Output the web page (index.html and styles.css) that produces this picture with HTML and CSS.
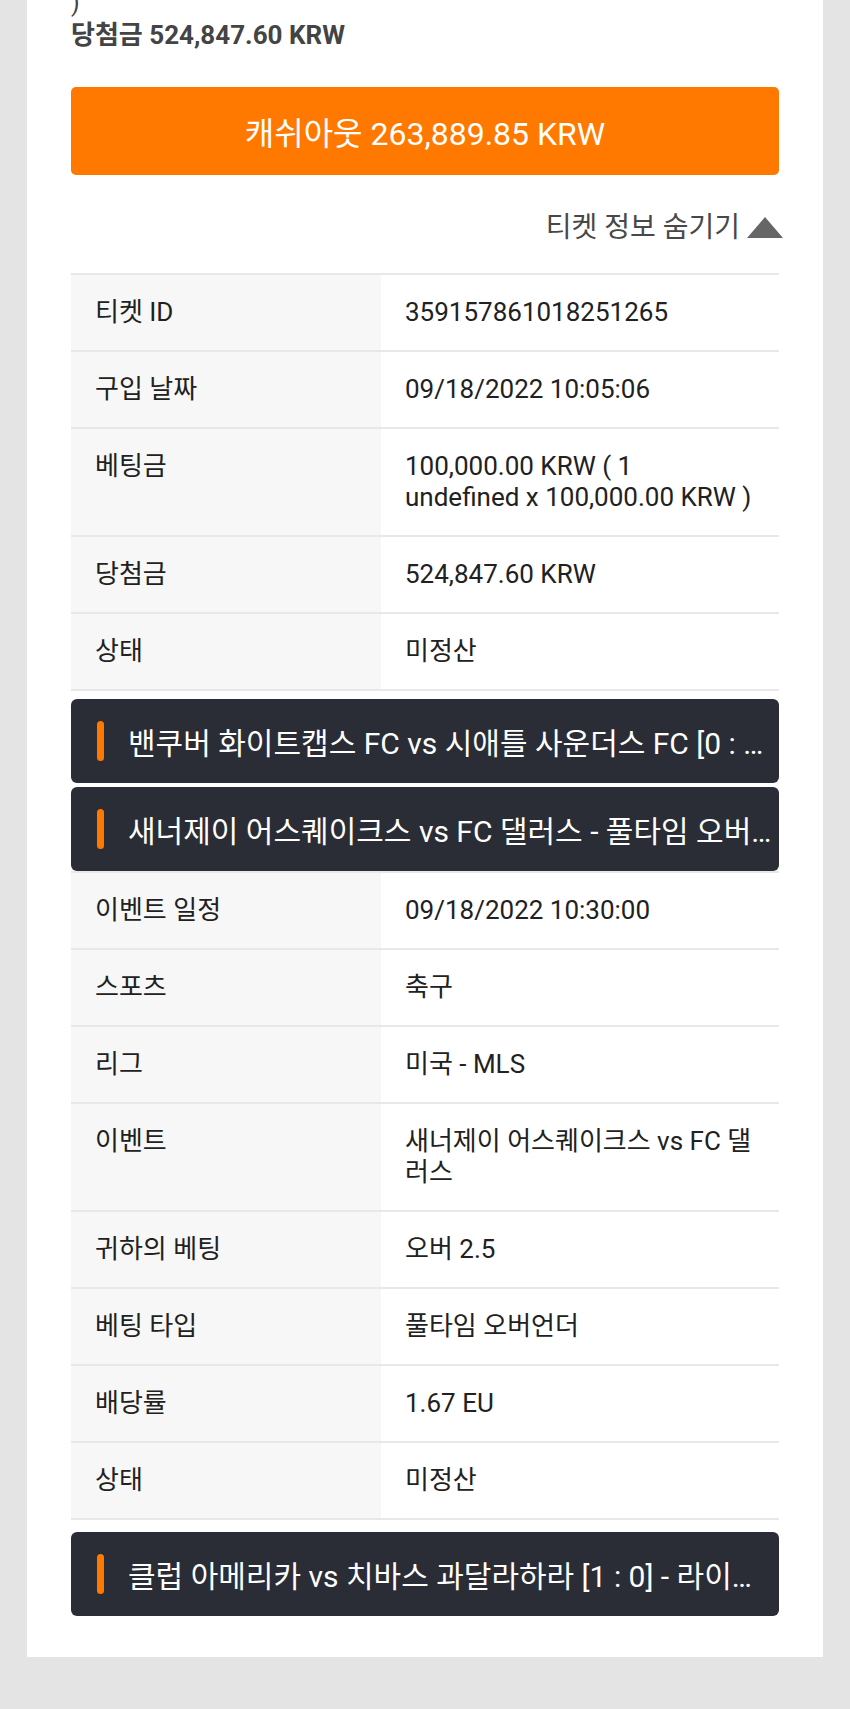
FILE: index.html
```html
<!DOCTYPE html>
<html lang="ko">
<head>
  <meta charset="UTF-8">
  <title>티켓 정보</title>
  <link rel="stylesheet" href="styles.css">
</head>
<body>
  <div class="card">
    <div class="cut-line">)</div>
    <div class="win-total">당첨금 524,847.60 KRW</div>

    <button class="cashout">캐쉬아웃 263,889.85 KRW</button>

    <div class="toggle">
      <span>티켓 정보 숨기기</span>
      <span class="tri"></span>
    </div>

    <table class="info">
      <tr><th>티켓 ID</th><td>359157861018251265</td></tr>
      <tr><th>구입 날짜</th><td>09/18/2022 10:05:06</td></tr>
      <tr><th>베팅금</th><td>100,000.00 KRW ( 1 <span class="nowrap">undefined x 100,000.00 KRW )</span></td></tr>
      <tr><th>당첨금</th><td>524,847.60 KRW</td></tr>
      <tr><th>상태</th><td>미정산</td></tr>
    </table>

    <div class="events">
      <div class="event-bar"><span class="mark"></span><span class="title">밴쿠버 화이트캡스 FC vs 시애틀 사운더스 FC [0 : 0] - 라이브 승무패</span></div>
      <div class="event-bar"><span class="mark"></span><span class="title">새너제이 어스퀘이크스 vs FC 댈러스 - 풀타임 오버언더</span></div>
    </div>

    <table class="info">
      <tr><th>이벤트 일정</th><td>09/18/2022 10:30:00</td></tr>
      <tr><th>스포츠</th><td>축구</td></tr>
      <tr><th>리그</th><td>미국 - MLS</td></tr>
      <tr><th>이벤트</th><td>새너제이 어스퀘이크스 vs FC 댈러스</td></tr>
      <tr><th>귀하의 베팅</th><td>오버 2.5</td></tr>
      <tr><th>베팅 타입</th><td>풀타임 오버언더</td></tr>
      <tr><th>배당률</th><td>1.67 EU</td></tr>
      <tr><th>상태</th><td>미정산</td></tr>
    </table>

    <div class="events last">
      <div class="event-bar"><span class="mark"></span><span class="title">클럽 아메리카 vs 치바스 과달라하라 [1 : 0] - 라이브 승무패</span></div>
    </div>
  </div>
</body>
</html>
```

FILE: styles.css
```css
body {
  margin: 0;
  padding: 0;
  background-color: #e4e4e4;
  font-family: Roboto, "Noto Sans CJK KR", sans-serif;
  color: #212121;
  height: 1709px;
  overflow: hidden;
}

.card {
  margin: 0 27px;
  padding: 0 44px 41px;
  background-color: #fff;
}

.cut-line {
  font-size: 25px;
  line-height: 28px;
  margin-top: -11px;
  color: #444;
}

.win-total {
  margin-top: 3px;
  font-size: 26px;
  line-height: 30px;
  font-weight: bold;
  color: #444;
}

.cashout {
  display: block;
  width: 100%;
  height: 88px;
  margin-top: 37px;
  border: none;
  border-radius: 5px;
  background-color: #ff7900;
  color: #fff;
  font-family: inherit;
  font-size: 32px;
  padding: 0;
}

.toggle {
  display: flex;
  justify-content: flex-end;
  align-items: center;
  gap: 7px;
  height: 40px;
  margin-top: 30px;
  margin-right: -4px;
  font-size: 28px;
  color: #484848;
}

.tri {
  width: 0;
  height: 0;
  margin-top: 4px;
  border-left: 18px solid transparent;
  border-right: 18px solid transparent;
  border-bottom: 21px solid #666;
}

.info {
  width: 100%;
  margin-top: 28px;
  border-collapse: collapse;
  table-layout: fixed;
  font-size: 26px;
  line-height: 31px;
  border-bottom: 2px solid #e8e8e8;
}

.info + .events {
  margin-top: 8px;
}

.events + .info {
  margin-top: 0;
}

.info th,
.info td {
  text-align: left;
  vertical-align: top;
  font-weight: normal;
  padding: 22px 24px;
  border-top: 2px solid #e8e8e8;
}

.info th {
  width: 310px;
  box-sizing: border-box;
  background-color: #f7f7f7;
}

.nowrap {
  white-space: nowrap;
}

.events {
  display: flex;
  flex-direction: column;
  gap: 4px;
}

.events.last {
  margin-top: 12px;
}

.event-bar {
  display: flex;
  align-items: center;
  height: 84px;
  padding: 0 5px 0 26px;
  border-radius: 6px;
  background-color: #2a2d36;
  color: #fff;
  font-size: 30px;
}

.mark {
  flex: none;
  width: 7px;
  height: 40px;
  margin-right: 24px;
  border-radius: 4px;
  background-color: #ff7900;
}

.title {
  flex: 1;
  min-width: 0;
  white-space: nowrap;
  overflow: hidden;
  text-overflow: ellipsis;
}
```
